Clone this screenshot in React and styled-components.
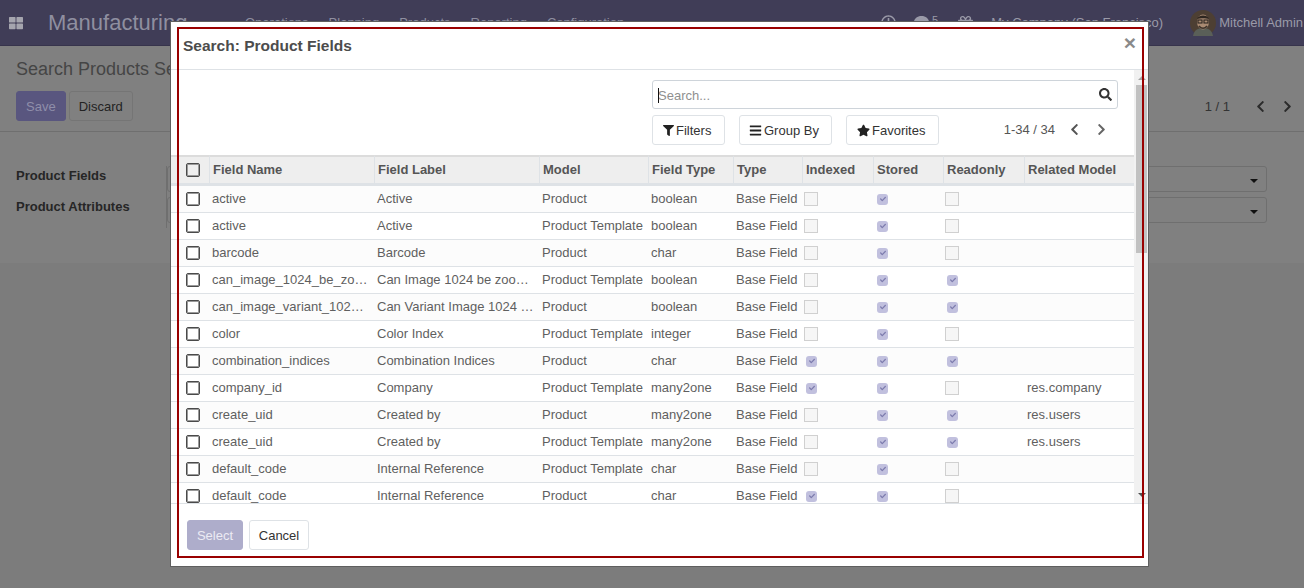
import React from "react";
import styled, { createGlobalStyle } from "styled-components";
import {
  FaBars,
  FaCheck,
  FaChevronLeft,
  FaChevronRight,
  FaComment,
  FaFilter,
  FaGift,
  FaRegClock,
  FaSearch,
  FaStar,
  FaThLarge,
} from "react-icons/fa";

const GlobalStyle = createGlobalStyle`
  html, body {
    margin: 0;
    height: 100%;
    overflow: hidden;
  }
  body {
    background: #7c7c7c;
    font-family: "Liberation Sans", Arial, sans-serif;
    font-size: 13px;
    color: #4c4c4c;
  }
  * {
    box-sizing: border-box;
  }
`;

const Page = styled.div`
  position: relative;
  width: 1304px;
  height: 588px;
  overflow: hidden;
`;

/* the page behind the dialog, already dimmed */
const Navbar = styled.header`
  height: 46px;
  background: #403d57;
  border-bottom: 1px solid #37344c;
  display: flex;
  align-items: center;
  color: #8f8fa0;
`;

const AppsIcon = styled.span`
  display: flex;
  width: 48px;
  padding-left: 9px;
  font-size: 14px;
  color: #a5a5ae;
`;

const Brand = styled.span`
  font-size: 22px;
  width: 197px;
`;

const MenuItem = styled.span`
  margin-right: 20px;
`;

const SystemTray = styled.div`
  margin-left: auto;
  padding-right: 1px;
  display: flex;
  align-items: center;
  color: #9a9aa8;
`;

const TrayIcon = styled.span`
  display: flex;
  margin-right: ${(p) => p.$gap}px;
  font-size: 15px;
`;

const TrayBadge = styled.span`
  font-size: 11px;
  margin: -6px 20px 0 0;
`;

const Avatar = styled.svg`
  width: 26px;
  height: 26px;
  margin: 0 3px 0 27px;
`;

const ControlPanel = styled.section`
  height: 86px;
  background: #808080;
  border-bottom: 1px solid #6f6f6f;
  padding: 12px 10px 0 16px;
`;

const Breadcrumb = styled.div`
  font-size: 18px;
  line-height: 22px;
  color: #454545;
`;

const PanelRow = styled.div`
  display: flex;
  align-items: center;
  margin-top: 11px;
`;

const PanelButton = styled.span`
  height: 30px;
  display: flex;
  align-items: center;
  padding: 0 9px;
  margin-right: 3px;
  border-radius: 3px;
  background: ${(p) => (p.$primary ? "#59567f" : "transparent")};
  border: 1px solid ${(p) => (p.$primary ? "#59567f" : "#757575")};
  color: ${(p) => (p.$primary ? "#8f8eaa" : "#232323")};
`;

const PanelPager = styled.div`
  margin-left: auto;
  display: flex;
  align-items: center;
  color: #333;
`;

const PagerArrow = styled.span`
  display: flex;
  font-size: 13px;
  margin-left: ${(p) => p.$gap}px;
  color: ${(p) => p.$color};
`;

const FormSheet = styled.section`
  height: 131px;
  background: #808080;
  padding: 34px 37px 0 16px;
  display: flex;
`;

const LabelColumn = styled.div`
  width: 151px;
  height: 62px;
  border-right: 1px solid #6f6f6f;
  font-weight: 700;
  color: #262626;
`;

const FieldLabel = styled.div`
  height: 31px;
  padding-top: 2px;
`;

const SelectColumn = styled.div`
  flex: 1;
`;

const SelectBox = styled.div`
  height: 26px;
  margin-bottom: 5px;
  padding: 3px 8px 0 0;
  border: 1px solid #6f6f6f;
  border-radius: 3px;
  display: flex;
  align-items: center;
  justify-content: flex-end;

  &::after {
    content: "";
    border-top: 4px solid #111;
    border-left: 4px solid transparent;
    border-right: 4px solid transparent;
  }
`;

/* dialog */
const Dialog = styled.div`
  position: absolute;
  left: 171px;
  top: 22px;
  width: 977px;
  height: 544px;
  background: #fff;
  display: flex;
  flex-direction: column;
  box-shadow: 0 0 0 1px #5f5f5f;
`;

const Outline = styled.div`
  position: absolute;
  left: 6px;
  top: 5px;
  width: 967px;
  height: 531px;
  border: 2px solid #990000;
  pointer-events: none;
  z-index: 2;
`;

const DialogHeader = styled.div`
  height: 48px;
  flex: none;
  border-bottom: 1px solid #dee2e6;
  display: flex;
  align-items: center;
  justify-content: space-between;
  padding: 1px 12px 0;
`;

const DialogTitle = styled.h4`
  margin: 0;
  font-size: 15.5px;
  font-weight: 700;
  color: #4c4c4c;
`;

const CloseButton = styled.span`
  font-size: 21px;
  font-weight: 700;
  line-height: 1;
  color: #8a8a8a;
  margin-top: -7px;
`;

const DialogBody = styled.div`
  height: 433px;
  flex: none;
  display: flex;
`;

const BodyContent = styled.div`
  width: 963px;
  overflow: hidden;
`;

const Scrollbar = styled.div`
  width: 14px;
  background: #f1f1f1;
  position: relative;
  padding: 15px 1px 0 2px;
`;

const ScrollThumb = styled.div`
  height: 168px;
  background: #c1c1c1;
`;

const ScrollArrow = styled.span`
  position: absolute;
  left: 4px;
  top: ${(p) => p.$top}px;
  border-left: 4px solid transparent;
  border-right: 4px solid transparent;
  ${(p) =>
    p.$down
      ? "border-top: 4px solid #505050;"
      : "border-bottom: 4px solid #a3a3a3;"}
`;

const SearchArea = styled.div`
  padding: 10px 16px 10px 481px;
`;

const SearchBox = styled.div`
  position: relative;
  height: 29px;
  border: 1px solid #ced4da;
  border-radius: 3px;
  display: flex;
  align-items: center;
  padding: 0 5px 0 5px;

  &::before {
    content: "";
    position: absolute;
    left: 5px;
    top: 7px;
    width: 1px;
    height: 15px;
    background: #111;
  }
`;

const SearchInput = styled.input`
  flex: 1;
  border: 0;
  outline: 0;
  padding: 1px 0 0;
  font: inherit;
  color: #4c4c4c;

  &::placeholder {
    color: #8f8f8f;
    opacity: 1;
  }
`;

const SearchIcon = styled.span`
  display: flex;
  font-size: 13px;
  color: #333;
`;

const FilterRow = styled.div`
  display: flex;
  align-items: center;
  margin-top: 6px;
`;

const FilterButton = styled.button`
  height: 30px;
  width: ${(p) => p.$width}px;
  margin-right: 14px;
  background: #fff;
  border: 1px solid #dee2e6;
  border-radius: 3px;
  font: inherit;
  color: #333;
  display: flex;
  align-items: center;
  gap: 2px;
  padding: 0 0 0 ${(p) => p.$pad}px;

  svg {
    color: #222;
  }
`;

const DialogPager = styled.div`
  margin-left: auto;
  display: flex;
  align-items: center;
  padding-right: 10px;
  color: #555;
  margin-top: -1px;
`;

const Table = styled.table`
  width: 963px;
  table-layout: fixed;
  border-collapse: separate;
  border-spacing: 0;
`;

const HeadCell = styled.th`
  height: 31px;
  background: #eee;
  border-top: 2px solid #dcdcdc;
  border-bottom: 3px solid #dee2e6;
  border-left: ${(p) => (p.$first ? "0" : "1px solid #dee2e6")};
  padding: 0 3px ${(p) => (p.$first ? 0 : 2)}px ${(p) => (p.$first ? 15 : 3)}px;
  text-align: left;
  font-weight: 700;
  color: #555;
  white-space: nowrap;
`;

const Cell = styled.td`
  height: 27px;
  border-bottom: 1px solid #dee2e6;
  padding: 0 2px 2px 3px;
  color: #5f5f5f;
  white-space: nowrap;
  overflow: hidden;
  text-overflow: ellipsis;
`;

const NameCell = styled(Cell)`
  padding-right: 5px;
`;

const BoxCell = styled(Cell)`
  padding-bottom: 0;
  padding-left: ${(p) => (p.$first ? 15 : 3)}px;
`;

const Row = styled.tr`
  background: ${(p) => (p.$odd ? "#fcfcfc" : "#fff")};
`;

const RowCheck = styled.span`
  display: block;
  width: 14px;
  height: 14px;
  border: 1px solid #4a4a4a;
  border-radius: 2px;
  box-shadow: inset 0 0 0 1px #9a9a9a;
  background: ${(p) => (p.$head ? "#eee" : "#fff")};
`;

const FlagBox = styled.span`
  display: flex;
  align-items: center;
  justify-content: center;
  ${(p) =>
    p.$checked
      ? `
    width: 11px;
    height: 11px;
    margin-left: 1px;
    border-radius: 3px;
    background: #c1c0de;
    color: #7c7bad;
    font-size: 6px;
  `
      : `
    width: 14px;
    height: 14px;
    margin-left: -1px;
    border: 1px solid #d0d0d0;
    background: #f6f6f6;
  `}
`;

const DialogFooter = styled.div`
  flex: 1;
  border-top: 1px solid #dee2e6;
  display: flex;
  align-items: flex-start;
  padding: 16px 16px 0;
  gap: 6px;
`;

const FooterButton = styled.button`
  height: 30px;
  width: ${(p) => p.$width}px;
  padding: 0;
  border-radius: 3px;
  font: inherit;
  border: 1px solid ${(p) => (p.$primary ? "#aeadcb" : "#dee2e6")};
  background: ${(p) => (p.$primary ? "#aeadcb" : "#fff")};
  color: ${(p) => (p.$primary ? "#ecebf4" : "#333")};
`;

const columns = [
  ["Field Name", 165],
  ["Field Label", 165],
  ["Model", 109],
  ["Field Type", 85],
  ["Type", 69],
  ["Indexed", 71],
  ["Stored", 70],
  ["Readonly", 81],
  ["Related Model", 110],
];

const P = "Product";
const T = "Product Template";

const fields = [
  ["active", "Active", P, "boolean", 0, 1, 0, ""],
  ["active", "Active", T, "boolean", 0, 1, 0, ""],
  ["barcode", "Barcode", P, "char", 0, 1, 0, ""],
  ["can_image_1024_be_zoomed", "Can Image 1024 be zoomed", T, "boolean", 0, 1, 1, ""],
  ["can_image_variant_1024_be_zoomed", "Can Variant Image 1024 be zoomed", P, "boolean", 0, 1, 1, ""],
  ["color", "Color Index", T, "integer", 0, 1, 0, ""],
  ["combination_indices", "Combination Indices", P, "char", 1, 1, 1, ""],
  ["company_id", "Company", T, "many2one", 1, 1, 0, "res.company"],
  ["create_uid", "Created by", P, "many2one", 0, 1, 1, "res.users"],
  ["create_uid", "Created by", T, "many2one", 0, 1, 1, "res.users"],
  ["default_code", "Internal Reference", T, "char", 0, 1, 0, ""],
  ["default_code", "Internal Reference", P, "char", 1, 1, 0, ""],
];

const Flag = ({ on }) =>
  on ? (
    <FlagBox $checked>
      <FaCheck />
    </FlagBox>
  ) : (
    <FlagBox />
  );

const App = () => (
  <Page>
    <GlobalStyle />
    <Navbar>
      <AppsIcon>
        <FaThLarge />
      </AppsIcon>
      <Brand>Manufacturing</Brand>
      <MenuItem>Operations</MenuItem>
      <MenuItem>Planning</MenuItem>
      <MenuItem>Products</MenuItem>
      <MenuItem>Reporting</MenuItem>
      <MenuItem>Configuration</MenuItem>
      <SystemTray>
        <TrayIcon $gap={18}>
          <FaRegClock />
        </TrayIcon>
        <TrayIcon $gap={3}>
          <FaComment />
        </TrayIcon>
        <TrayBadge>5</TrayBadge>
        <TrayIcon $gap={18}>
          <FaGift />
        </TrayIcon>
        <span>My Company (San Francisco)</span>
        <Avatar viewBox="0 0 26 26">
          <circle cx="13" cy="13" r="13" fill="#4d3f33" />
          <path d="M3 26c1-6 5-8 10-8s9 2 10 8z" fill="#5a5f58" />
          <ellipse cx="13" cy="12" rx="6" ry="7.5" fill="#a98a72" />
          <path d="M7 9c1-4 10-5 12 0-3-1-9-1-12 0z" fill="#2e2620" />
          <rect x="8" y="10" width="4" height="3" fill="none" stroke="#241f1b" />
          <rect x="14" y="10" width="4" height="3" fill="none" stroke="#241f1b" />
          <path d="M9 16c2 3 6 3 8 0" stroke="#3d332b" strokeWidth="1.5" fill="none" />
        </Avatar>
        <span>Mitchell Admin</span>
      </SystemTray>
    </Navbar>

    <ControlPanel>
      <Breadcrumb>Search Products Se</Breadcrumb>
      <PanelRow>
        <PanelButton $primary>Save</PanelButton>
        <PanelButton>Discard</PanelButton>
        <PanelPager>
          1 / 1
          <PagerArrow $gap={24} $color="#2b2b2b">
            <FaChevronLeft />
          </PagerArrow>
          <PagerArrow $gap={14} $color="#2b2b2b">
            <FaChevronRight />
          </PagerArrow>
        </PanelPager>
      </PanelRow>
    </ControlPanel>

    <FormSheet>
      <LabelColumn>
        <FieldLabel>Product Fields</FieldLabel>
        <FieldLabel>Product Attributes</FieldLabel>
      </LabelColumn>
      <SelectColumn>
        <SelectBox />
        <SelectBox />
      </SelectColumn>
    </FormSheet>

    <Dialog>
      <Outline />
      <DialogHeader>
        <DialogTitle>Search: Product Fields</DialogTitle>
        <CloseButton>×</CloseButton>
      </DialogHeader>
      <DialogBody>
        <BodyContent>
          <SearchArea>
            <SearchBox>
              <SearchInput placeholder="Search..." readOnly />
              <SearchIcon>
                <FaSearch />
              </SearchIcon>
            </SearchBox>
            <FilterRow>
              <FilterButton $width={73} $pad={10}>
                <FaFilter size={11} /> Filters
              </FilterButton>
              <FilterButton $width={93} $pad={9}>
                <FaBars size={13} /> Group By
              </FilterButton>
              <FilterButton $width={93} $pad={10}>
                <FaStar size={13} /> Favorites
              </FilterButton>
              <DialogPager>
                1-34 / 34
                <PagerArrow $gap={13} $color="#555">
                  <FaChevronLeft />
                </PagerArrow>
                <PagerArrow $gap={14} $color="#666">
                  <FaChevronRight />
                </PagerArrow>
              </DialogPager>
            </FilterRow>
          </SearchArea>
          <Table>
            <colgroup>
              <col style={{ width: 38 }} />
              {columns.map(([name, width]) => (
                <col key={name} style={{ width }} />
              ))}
            </colgroup>
            <thead>
              <tr>
                <HeadCell $first>
                  <RowCheck $head />
                </HeadCell>
                {columns.map(([name]) => (
                  <HeadCell key={name}>{name}</HeadCell>
                ))}
              </tr>
            </thead>
            <tbody>
              {fields.map((f, i) => (
                <Row key={i} $odd={i % 2 === 0}>
                  <BoxCell $first>
                    <RowCheck />
                  </BoxCell>
                  <NameCell>{f[0]}</NameCell>
                  <NameCell>{f[1]}</NameCell>
                  <Cell>{f[2]}</Cell>
                  <Cell>{f[3]}</Cell>
                  <Cell>Base Field</Cell>
                  <BoxCell>
                    <Flag on={f[4]} />
                  </BoxCell>
                  <BoxCell>
                    <Flag on={f[5]} />
                  </BoxCell>
                  <BoxCell>
                    <Flag on={f[6]} />
                  </BoxCell>
                  <Cell>{f[7]}</Cell>
                </Row>
              ))}
            </tbody>
          </Table>
        </BodyContent>
        <Scrollbar>
          <ScrollArrow $top={6} />
          <ScrollThumb />
          <ScrollArrow $top={423} $down />
        </Scrollbar>
      </DialogBody>
      <DialogFooter>
        <FooterButton $primary $width={56}>
          Select
        </FooterButton>
        <FooterButton $width={60}>Cancel</FooterButton>
      </DialogFooter>
    </Dialog>
  </Page>
);

export default App;
